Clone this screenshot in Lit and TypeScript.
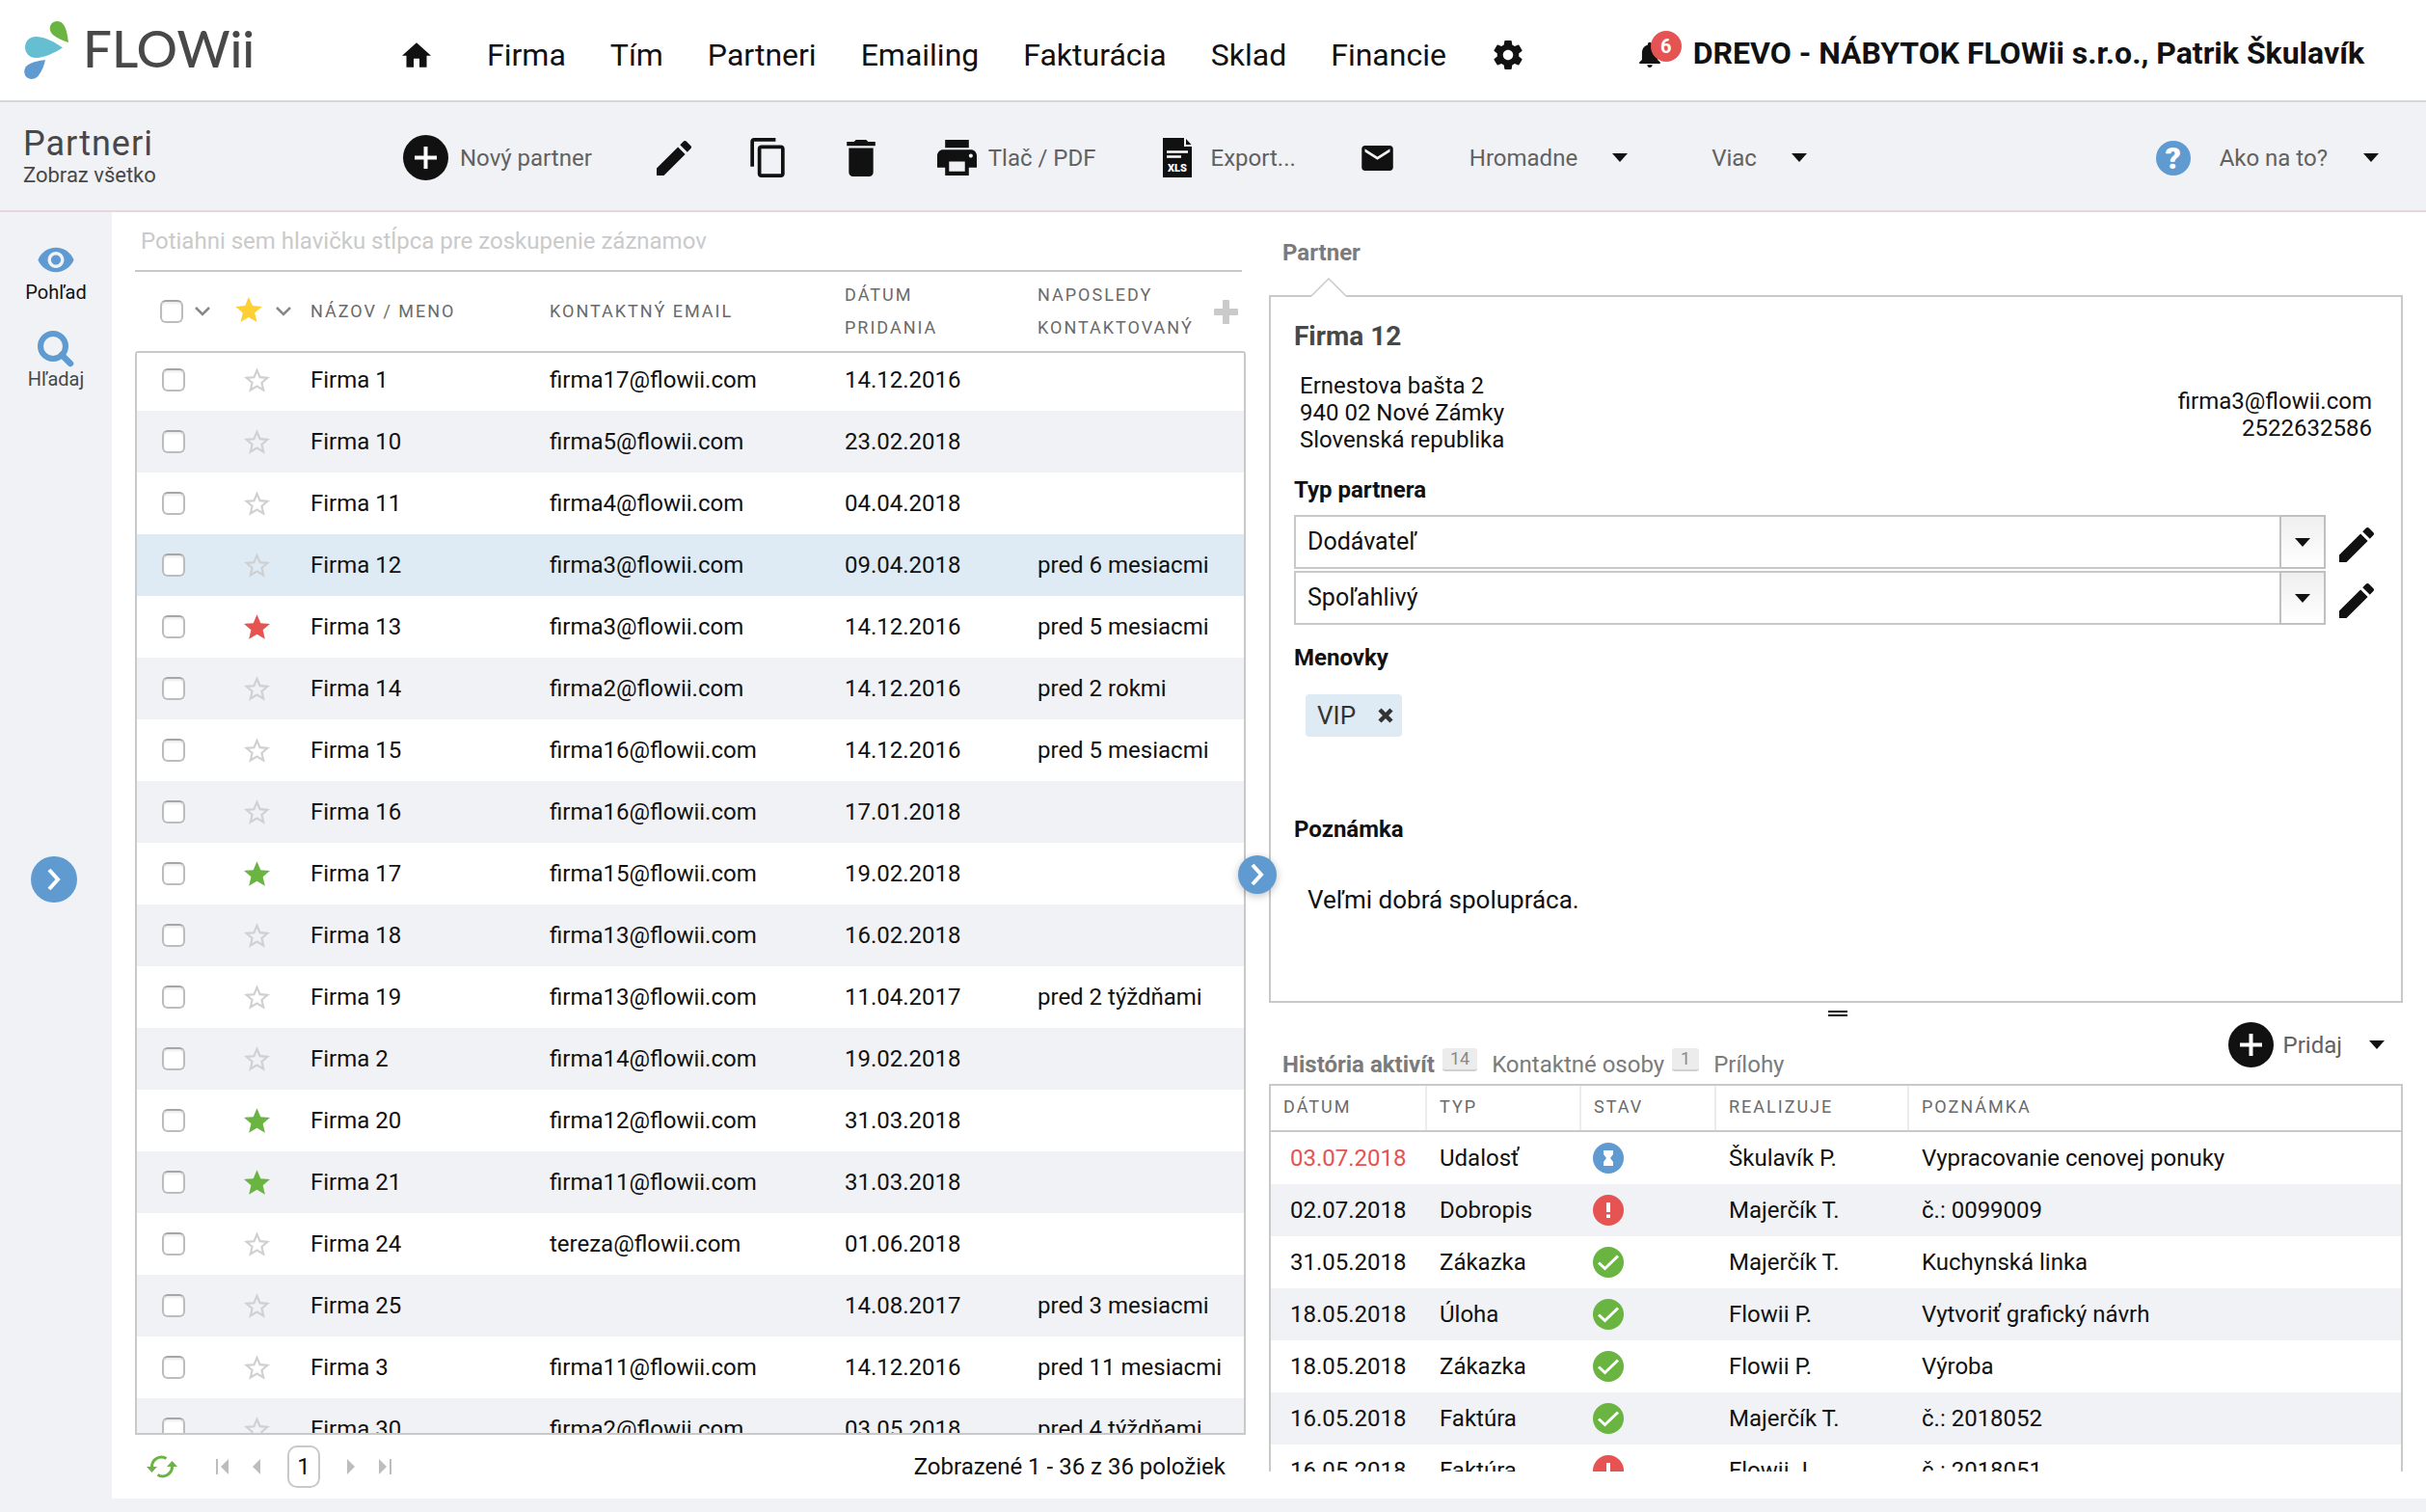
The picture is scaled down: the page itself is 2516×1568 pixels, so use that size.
import { LitElement, html, css, svg, nothing } from "lit";
import { customElement, property, state } from "lit/decorators.js";
import { classMap } from "lit/directives/class-map.js";

const STAR =
  "M12 17.27 18.18 21l-1.64-7.03L22 9.24l-7.19-.61L12 2 9.19 8.63 2 9.24l5.46 4.73L5.82 21z";
const STAR_OUTLINE =
  "M22 9.24l-7.19-.62L12 2 9.19 8.63 2 9.24l5.46 4.73L5.82 21 12 17.27 18.18 21l-1.63-7.03L22 9.24zM12 15.4l-3.76 2.27 1-4.28-3.32-2.88 4.38-.38L12 6.1l1.71 4.04 4.38.38-3.32 2.88 1 4.28L12 15.4z";
const EDIT =
  "M3 17.25V21h3.75L17.81 9.94l-3.75-3.75L3 17.25zM20.71 7.04c.39-.39.39-1.02 0-1.41l-2.34-2.34c-.39-.39-1.02-.39-1.41 0l-1.83 1.83 3.75 3.75 1.83-1.83z";
const COPY =
  "M16 1H4c-1.1 0-2 .9-2 2v14h2V3h12V1zm3 4H8c-1.1 0-2 .9-2 2v14c0 1.1.9 2 2 2h11c1.1 0 2-.9 2-2V7c0-1.1-.9-2-2-2zm0 16H8V7h11v14z";
const TRASH = "M6 19c0 1.1.9 2 2 2h8c1.1 0 2-.9 2-2V7H6v12zM19 4h-3.5l-1-1h-5l-1 1H5v2h14V4z";
const PRINT =
  "M19 8H5c-1.66 0-3 1.34-3 3v6h4v4h12v-4h4v-6c0-1.66-1.34-3-3-3zm-3 11H8v-5h8v5zm3-7c-.55 0-1-.45-1-1s.45-1 1-1 1 .45 1 1-.45 1-1 1zm-1-9H6v4h12V3z";
const MAIL =
  "M20 4H4c-1.1 0-1.99.9-1.99 2L2 18c0 1.1.9 2 2 2h16c1.1 0 2-.9 2-2V6c0-1.1-.9-2-2-2zm0 4l-8 5-8-5V6l8 5 8-5v2z";
const HOME = "M10 20v-6h4v6h5v-8h3L12 3 2 12h3v8z";
const GEAR =
  "M19.43 12.98c.04-.32.07-.64.07-.98s-.03-.66-.07-.98l2.11-1.65c.19-.15.24-.42.12-.64l-2-3.46c-.12-.22-.39-.3-.61-.22l-2.49 1c-.52-.4-1.08-.73-1.69-.98l-.38-2.65C14.46 2.18 14.25 2 14 2h-4c-.25 0-.46.18-.49.42l-.38 2.65c-.61.25-1.17.59-1.69.98l-2.49-1c-.23-.09-.49 0-.61.22l-2 3.46c-.13.22-.07.49.12.64l2.11 1.65c-.04.32-.07.65-.07.98s.03.66.07.98l-2.11 1.65c-.19.15-.24.42-.12.64l2 3.46c.12.22.39.3.61.22l2.49-1c.52.4 1.08.73 1.69.98l.38 2.65c.03.24.24.42.49.42h4c.25 0 .46-.18.49-.42l.38-2.65c.61-.25 1.17-.59 1.69-.98l2.49 1c.23.09.49 0 .61-.22l2-3.46c.12-.22.07-.49-.12-.64l-2.11-1.65zM12 15.5c-1.93 0-3.5-1.57-3.5-3.5s1.57-3.5 3.5-3.5 3.5 1.57 3.5 3.5-1.57 3.5-3.5 3.5z";
const BELL =
  "M12 22c1.1 0 2-.9 2-2h-4c0 1.1.89 2 2 2zm6-6v-5c0-3.07-1.64-5.64-4.5-6.32V4c0-.83-.67-1.5-1.5-1.5s-1.5.67-1.5 1.5v.68C7.63 5.36 6 7.92 6 11v5l-2 2v1h16v-1l-2-2z";
const EYE =
  "M12 4.5C7 4.5 2.73 7.61 1 12c1.73 4.39 6 7.5 11 7.5s9.27-3.11 11-7.5c-1.73-4.39-6-7.5-11-7.5zM12 17c-2.76 0-5-2.24-5-5s2.24-5 5-5 5 2.24 5 5-2.24 5-5 5zm0-8c-1.66 0-3 1.34-3 3s1.34 3 3 3 3-1.34 3-3-1.34-3-3-3z";

const icon = (d: string, box: string, w: number, h: number) => html`<svg
  width=${w} height=${h} viewBox=${box} fill="currentColor" aria-hidden="true"
><path d=${d}></path></svg>`;

const pencil = () => icon(EDIT, "3 3 18 18", 36, 36);
const caret = () => icon("M0 0h16L8 9z", "0 0 16 9", 16, 9);
const plusDisc = () => html`<svg width="47" height="47" viewBox="0 0 47 47" aria-hidden="true">
  <circle cx="23.5" cy="23.5" r="23.5" fill="#111"></circle>
  <path d="M23.5 12v23M12 23.5h23" stroke="#fff" stroke-width="4"></path>
</svg>`;
const chevronDown = () => html`<svg width="16" height="10" viewBox="0 0 16 10" aria-hidden="true">
  <path d="M1 1l7 7 7-7" fill="none" stroke="#888" stroke-width="2.5"></path>
</svg>`;
const chevronRight = () => html`<svg width="14" height="24" viewBox="0 0 14 24" aria-hidden="true">
  <path d="M2 2l9 10-9 10" fill="none" stroke="#fff" stroke-width="4"></path>
</svg>`;

type StarColor = "none" | "red" | "green";
interface Partner {
  name: string;
  email: string;
  added: string;
  contacted: string;
  star: StarColor;
}

const p = (name: string, email: string, added: string, contacted = "", star: StarColor = "none"): Partner => ({
  name,
  email,
  added,
  contacted,
  star,
});

const PARTNERS: Partner[] = [
  p("Firma 1", "firma17@flowii.com", "14.12.2016"),
  p("Firma 10", "firma5@flowii.com", "23.02.2018"),
  p("Firma 11", "firma4@flowii.com", "04.04.2018"),
  p("Firma 12", "firma3@flowii.com", "09.04.2018", "pred 6 mesiacmi"),
  p("Firma 13", "firma3@flowii.com", "14.12.2016", "pred 5 mesiacmi", "red"),
  p("Firma 14", "firma2@flowii.com", "14.12.2016", "pred 2 rokmi"),
  p("Firma 15", "firma16@flowii.com", "14.12.2016", "pred 5 mesiacmi"),
  p("Firma 16", "firma16@flowii.com", "17.01.2018"),
  p("Firma 17", "firma15@flowii.com", "19.02.2018", "", "green"),
  p("Firma 18", "firma13@flowii.com", "16.02.2018"),
  p("Firma 19", "firma13@flowii.com", "11.04.2017", "pred 2 týždňami"),
  p("Firma 2", "firma14@flowii.com", "19.02.2018"),
  p("Firma 20", "firma12@flowii.com", "31.03.2018", "", "green"),
  p("Firma 21", "firma11@flowii.com", "31.03.2018", "", "green"),
  p("Firma 24", "tereza@flowii.com", "01.06.2018"),
  p("Firma 25", "", "14.08.2017", "pred 3 mesiacmi"),
  p("Firma 3", "firma11@flowii.com", "14.12.2016", "pred 11 mesiacmi"),
  p("Firma 30", "firma2@flowii.com", "03.05.2018", "pred 4 týždňami"),
];

type Status = "waiting" | "alert" | "done";
interface Activity {
  date: string;
  type: string;
  status: Status;
  owner: string;
  note: string;
  late?: boolean;
}

const ACTIVITIES: Activity[] = [
  { date: "03.07.2018", type: "Udalosť", status: "waiting", owner: "Škulavík P.", note: "Vypracovanie cenovej ponuky", late: true },
  { date: "02.07.2018", type: "Dobropis", status: "alert", owner: "Majerčík T.", note: "č.: 0099009" },
  { date: "31.05.2018", type: "Zákazka", status: "done", owner: "Majerčík T.", note: "Kuchynská linka" },
  { date: "18.05.2018", type: "Úloha", status: "done", owner: "Flowii P.", note: "Vytvoriť grafický návrh" },
  { date: "18.05.2018", type: "Zákazka", status: "done", owner: "Flowii P.", note: "Výroba" },
  { date: "16.05.2018", type: "Faktúra", status: "done", owner: "Majerčík T.", note: "č.: 2018052" },
  { date: "16.05.2018", type: "Faktúra", status: "alert", owner: "Flowii J.", note: "č.: 2018051" },
];

const base = css`
  * {
    box-sizing: border-box;
  }
  svg {
    display: block;
    flex: none;
  }
  button,
  select,
  textarea,
  input {
    font: inherit;
    color: inherit;
    margin: 0;
  }
  button {
    background: none;
    border: 0;
    padding: 0;
    cursor: pointer;
    display: flex;
    align-items: center;
  }
  a {
    color: inherit;
    text-decoration: none;
  }
  .check {
    appearance: none;
    width: 24px;
    height: 24px;
    border: 2px solid #bdbdbd;
    border-top-color: #a6a6a6;
    border-radius: 6px;
    background: #fff;
    box-shadow: inset 0 2px 2px #ececec;
  }
  .check:checked {
    background: #5f9bd0;
  }
`;

@customElement("app-header")
class AppHeader extends LitElement {
  static styles = [
    base,
    css`
      :host {
        display: block;
      }
      .bar {
        display: grid;
        grid-template-columns: 393px 1fr auto;
        align-items: center;
        height: 106px;
        padding: 0 64px 0 24px;
        border-bottom: 2px solid #d6d6d6;
        background: #fff;
      }
      .logo {
        display: flex;
        align-items: center;
        gap: 14px;
        font: 500 53px/60px Lato, sans-serif;
        color: #484848;
      }
      .word {
        padding-bottom: 4px;
      }
      .nav {
        display: flex;
        align-items: center;
        gap: 46px;
        padding-top: 10px;
        font-size: 32px;
        line-height: 40px;
      }
      .home {
        margin-right: 12px;
      }
      .gear {
        margin-left: 3px;
      }
      .user {
        display: flex;
        align-items: center;
        gap: 12px;
        padding-top: 5px;
        font-size: 32px;
        line-height: 40px;
        font-weight: 700;
      }
      .bell {
        position: relative;
        width: 44px;
        height: 40px;
        padding-top: 8px;
        align-items: flex-start;
      }
      .count {
        position: absolute;
        right: 0;
        top: -3px;
        width: 32px;
        height: 32px;
        border-radius: 50%;
        background: #e55353;
        color: #fff;
        font-size: 20px;
        line-height: 32px;
        text-align: center;
      }
    `,
  ];

  render() {
    const items = ["Firma", "Tím", "Partneri", "Emailing", "Fakturácia", "Sklad", "Financie"];
    return html`<header class="bar">
      <a class="logo" href="#">
        <svg width="48" height="62" viewBox="24 19 48 62" aria-hidden="true">
          <path fill="#6ab441" d="M71 42C70 34 68.500 26 65 22.500C61.500 19 56 19.500 53.500 22.500C50.500 26 51.500 31.500 55.500 34.500C59.500 37.500 65 40 71 42Z"></path>
          <path fill="#65bfd1" d="M65 47.500C57 42 48 36.500 38 36C31 35.800 26 40.500 26 47C26 53.500 31 58 37 58C47 57.500 56 53 65 47.500Z"></path>
          <path fill="#5f9bd0" d="M47 60C46 65 44 71 39.500 77C36 80.800 30 81 27 77.500C24.500 74.500 24.500 69 28 66C32.500 62.500 40 61 47 60Z"></path>
        </svg>
        <span class="word">FLOWii</span>
      </a>
      <nav class="nav">
        <a class="home" href="#" aria-label="Domov">${icon(HOME, "2 3 20 17", 30, 26)}</a>
        ${items.map((t) => html`<a href="#">${t}</a>`)}
        <a class="gear" href="#" aria-label="Nastavenia">${icon(GEAR, "2 2 20 20", 30, 30)}</a>
      </nav>
      <div class="user">
        <button class="bell" aria-label="Upozornenia">
          ${icon(BELL, "4 2 16 20", 22, 27)}<span class="count">6</span>
        </button>
        <a href="#">DREVO - NÁBYTOK FLOWii s.r.o., Patrik Škulavík</a>
      </div>
    </header>`;
  }
}

@customElement("app-toolbar")
class AppToolbar extends LitElement {
  static styles = [
    base,
    css`
      :host {
        display: block;
      }
      .bar {
        display: grid;
        grid-template-columns: 394px 1fr auto;
        align-items: center;
        height: 114px;
        padding: 0 49px 0 24px;
        border-bottom: 2px solid #e6d8da;
        background: #f1f2f6;
      }
      .title {
        margin: 0;
        font-size: 36px;
        line-height: 40px;
        font-weight: 400;
        letter-spacing: 1px;
        color: #484848;
      }
      .sub {
        margin: 0;
        font-size: 22px;
        line-height: 26px;
        color: #484848;
      }
      .tools {
        display: flex;
        align-items: center;
        gap: 61px;
        padding-top: 3px;
        color: #111;
      }
      .tool {
        justify-content: center;
        min-width: 36px;
      }
      .labelled {
        gap: 12px;
        padding-right: 6px;
      }
      .menu {
        gap: 36px;
        padding: 0 10px 0 16px;
      }
      .text {
        color: #616161;
      }
      .doc {
        padding: 0 8px 0 2px;
      }
      .doc-text {
        font: 900 11px Roboto, sans-serif;
        fill: #fff;
      }
      .help {
        display: flex;
        gap: 30px;
        align-items: center;
        padding-top: 3px;
      }
      .help-menu {
        gap: 37px;
      }
      .question {
        width: 36px;
        height: 36px;
        border-radius: 50%;
        background: #5f9bd0;
        color: #fff;
        font-size: 32px;
        line-height: 36px;
        font-weight: 900;
        text-align: center;
      }
    `,
  ];

  render() {
    return html`<section class="bar">
      <div>
        <h1 class="title">Partneri</h1>
        <p class="sub">Zobraz všetko</p>
      </div>
      <div class="tools">
        <button class="tool labelled">${plusDisc()}<span class="text">Nový partner</span></button>
        <button class="tool" aria-label="Upraviť">${pencil()}</button>
        <button class="tool" aria-label="Kopírovať">${icon(COPY, "2 1 19 22", 36, 41)}</button>
        <button class="tool" aria-label="Zmazať">${icon(TRASH, "5 3 14 18", 30, 38)}</button>
        <button class="tool labelled">${icon(PRINT, "2 3 20 18", 41, 37)}<span class="text">Tlač / PDF</span></button>
        <button class="tool labelled">
          <span class="doc">
            <svg width="30" height="41" viewBox="0 0 30 41" aria-hidden="true">
              <path fill="#111" d="M0 0h22v9h8v32H0z"></path>
              <path fill="#111" d="M24 1l5.500 6H24z"></path>
              <path stroke="#fff" stroke-width="2.5" d="M4 14.500h22M4 19.500h15"></path>
              <text class="doc-text" x="15" y="35" text-anchor="middle">XLS</text>
            </svg>
          </span>
          <span class="text">Export...</span>
        </button>
        <button class="tool" aria-label="Poslať email">${icon(MAIL, "2 4 20 16", 33, 26)}</button>
        <button class="menu"><span class="text">Hromadne</span>${caret()}</button>
        <button class="menu"><span class="text">Viac</span>${caret()}</button>
      </div>
      <div class="help">
        <span class="question">?</span>
        <button class="help-menu"><span class="text">Ako na to?</span>${caret()}</button>
      </div>
    </section>`;
  }
}

@customElement("side-rail")
class SideRail extends LitElement {
  static styles = [
    base,
    css`
      :host {
        display: grid;
        grid-template-rows: 1fr auto 1fr;
        justify-items: center;
        padding-top: 36px;
        background: #f1f2f6;
        font-size: 20px;
        line-height: 24px;
      }
      .links {
        display: flex;
        flex-direction: column;
        align-items: center;
        gap: 28px;
      }
      .link {
        flex-direction: column;
        gap: 8px;
        color: #111;
      }
      .search {
        gap: 0;
        color: #484848;
      }
      .ico {
        color: #5f9bd0;
      }
      .open {
        justify-content: center;
        width: 48px;
        height: 48px;
        margin-right: 4px;
        border-radius: 50%;
        background: #5f9bd0;
      }
    `,
  ];

  render() {
    return html`<div class="links">
        <button class="link"><span class="ico">${icon(EYE, "1 4 22 16", 40, 27)}</span>Pohľad</button>
        <button class="link search">
          <span class="ico">
            <svg width="40" height="38" viewBox="0 0 40 38" aria-hidden="true">
              <circle cx="17" cy="16" r="13" fill="none" stroke="currentColor" stroke-width="6"></circle>
              <path d="M26 25l9 9" stroke="currentColor" stroke-width="6.5" stroke-linecap="round"></path>
            </svg>
          </span>
          Hľadaj
        </button>
      </div>
      <button class="open" aria-label="Rozbaliť panel">${chevronRight()}</button>`;
  }
}

@customElement("partner-list")
class PartnerList extends LitElement {
  @state() private selected = 3;

  static styles = [
    base,
    css`
      :host {
        position: relative;
        display: flex;
        flex-direction: column;
        min-height: 0;
      }
      .group {
        display: flex;
        align-items: center;
        height: 62px;
        margin-right: 4px;
        padding-left: 6px;
        border-bottom: 2px solid #c9c9c9;
        color: #cacaca;
      }
      .grid {
        display: flex;
        flex-direction: column;
        flex: 1;
        min-height: 0;
      }
      .head {
        display: block;
        padding: 0 2px;
        font-size: 18px;
        line-height: 34px;
        letter-spacing: 2px;
        color: #6a6a6a;
      }
      .row {
        display: grid;
        grid-template-columns: 88px 72px 248fr 306fr 200fr 234fr;
        align-items: center;
        height: 64px;
      }
      .head-row {
        height: 82px;
      }
      .body {
        display: block;
        flex: 1;
        min-height: 0;
        overflow: hidden;
        border: 2px solid #c9c9c9;
        border-radius: 3px 3px 0 0;
      }
      .body .row:first-child {
        margin-top: -4px;
      }
      .body .row:nth-child(even) {
        background: #f1f2f6;
      }
      .body .row.selected {
        background: #deebf5;
      }
      .cell {
        display: block;
        min-width: 0;
        padding: 0 0 0 20px;
        font-weight: 400;
        text-align: left;
        white-space: nowrap;
      }
      .pick {
        display: flex;
        align-items: center;
        padding-left: 26px;
      }
      .pick-all {
        display: flex;
        align-items: center;
        gap: 12px;
        padding-left: 24px;
      }
      .fav {
        display: flex;
        justify-content: center;
        padding: 0;
      }
      .fav-all {
        display: flex;
        align-items: center;
        gap: 14px;
        padding-left: 14px;
      }
      .last {
        display: flex;
        align-items: center;
        justify-content: space-between;
        padding-right: 6px;
      }
      .none {
        color: #d0d0d0;
      }
      .red {
        color: #e55353;
      }
      .green {
        color: #6ab441;
      }
      .yellow {
        padding-bottom: 4px;
        color: #fed033;
      }
      .pager {
        display: flex;
        align-items: center;
        height: 66px;
        padding: 0 21px 0 12px;
        color: #bdbdbd;
      }
      .refresh {
        margin-right: 40px;
      }
      .first {
        margin-right: 25px;
      }
      .page {
        justify-content: center;
        width: 34px;
        height: 44px;
        margin: 0 28px;
        border: 2px solid #c9c9c9;
        border-radius: 10px;
        color: #111;
      }
      .to-end {
        margin-left: 25px;
      }
      .total {
        margin-left: auto;
        color: #111;
      }
      .split {
        position: absolute;
        top: 50%;
        right: -32px;
        z-index: 1;
        justify-content: center;
        width: 40px;
        height: 40px;
        border-radius: 50%;
        background: #5f9bd0;
        box-shadow: 0 2px 8px rgba(0, 0, 0, 0.25);
      }
    `,
  ];

  render() {
    return html`<div class="group">Potiahni sem hlavičku stĺpca pre zoskupenie záznamov</div>
      <table class="grid">
        <thead class="head">
          <tr class="row head-row">
            <th class="cell pick-all">
              <input class="check" type="checkbox" aria-label="Vybrať všetko" />${chevronDown()}
            </th>
            <th class="cell fav-all"><span class="yellow">${icon(STAR, "2 2 20 19", 28, 26)}</span>${chevronDown()}</th>
            <th class="cell">NÁZOV / MENO</th>
            <th class="cell">KONTAKTNÝ EMAIL</th>
            <th class="cell">DÁTUM<br />PRIDANIA</th>
            <th class="cell last">
              <span>NAPOSLEDY<br />KONTAKTOVANÝ</span>
              <button aria-label="Pridať stĺpec">
                <svg width="25" height="25" viewBox="0 0 25 25" aria-hidden="true">
                  <path fill="#cacaca" d="M10 0h5q1 0 1 1v8h8q1 0 1 1v5q0 1-1 1h-8v8q0 1-1 1h-5q-1 0-1-1v-8H1q-1 0-1-1v-5q0-1 1-1h8V1q0-1 1-1z"></path>
                </svg>
              </button>
            </th>
          </tr>
        </thead>
        <tbody class="body">
          ${PARTNERS.map(
            (r, i) => html`<tr
              class=${classMap({ row: true, selected: i === this.selected })}
              @click=${() => (this.selected = i)}
            >
              <td class="cell pick"><input class="check" type="checkbox" aria-label=${r.name} /></td>
              <td class="cell fav">
                <span class=${r.star}>${icon(r.star === "none" ? STAR_OUTLINE : STAR, "2 2 20 19", 27, 26)}</span>
              </td>
              <td class="cell">${r.name}</td>
              <td class="cell">${r.email}</td>
              <td class="cell">${r.added}</td>
              <td class="cell">${r.contacted}</td>
            </tr>`
          )}
        </tbody>
      </table>
      <footer class="pager">
        <button class="refresh" aria-label="Obnoviť">
          <svg width="32" height="24" viewBox="0 0 32 24" aria-hidden="true">
            <path fill="none" stroke="#6ab441" stroke-width="3" d="M5.500 12.500A10 10 0 0 1 20.500 3.500M26.500 11.500A10 10 0 0 1 11.500 20.500"></path>
            <path fill="#6ab441" d="M0 12h11l-5.500 6zM21 12h11l-5.500-6z"></path>
          </svg>
        </button>
        <button class="first" aria-label="Prvá strana">${icon("M0 0h2v16H0zM13 0v16L5 8z", "0 0 13 16", 13, 16)}</button>
        <button aria-label="Predchádzajúca strana">${icon("M8 0v16L0 8z", "0 0 8 16", 8, 16)}</button>
        <button class="page">1</button>
        <button aria-label="Ďalšia strana">${icon("M0 0v16l8-8z", "0 0 8 16", 8, 16)}</button>
        <button class="to-end" aria-label="Posledná strana">${icon("M11 0h2v16h-2zM0 0v16l8-8z", "0 0 13 16", 13, 16)}</button>
        <span class="total">Zobrazené 1 - 36 z 36 položiek</span>
      </footer>
      <button class="split" aria-label="Skryť detail">${chevronRight()}</button>`;
  }
}

@customElement("status-icon")
class StatusIcon extends LitElement {
  @property() kind: Status = "done";

  static styles = [
    base,
    css`
      :host {
        display: block;
      }
    `,
  ];

  render() {
    const fill = { waiting: "#5f9bd0", alert: "#e55353", done: "#6ab441" }[this.kind];
    const mark = {
      waiting: svg`<path fill="#fff" d="M11 8h10v4l-3 4 3 4v4H11v-4l3-4-3-4z"></path>`,
      alert: svg`<path fill="#fff" d="M14 8h4v10h-4zM14 20.500h4v3.500h-4z"></path>`,
      done: svg`<path fill="none" stroke="#fff" stroke-width="3" d="M6 16.500l6.500 6L26 9.500"></path>`,
    }[this.kind];
    return html`<svg width="32" height="32" viewBox="0 0 32 32" aria-hidden="true">
      <circle cx="16" cy="16" r="16" fill=${fill}></circle>${mark}
    </svg>`;
  }
}

@customElement("partner-detail")
class PartnerDetail extends LitElement {
  static styles = [
    base,
    css`
      :host {
        display: grid;
        grid-template-rows: 86px minmax(0, 734fr) 84px minmax(0, 402fr);
        min-height: 0;
        padding-bottom: 28px;
      }
      .tab {
        margin: 0;
        padding: 28px 0 0 14px;
        font-size: 24px;
        line-height: 28px;
        font-weight: 700;
        color: #7b7b7b;
      }
      .card {
        position: relative;
        min-height: 0;
        padding: 23px 24px 0;
        border: 2px solid #c9c9c9;
      }
      .notch {
        position: absolute;
        left: 42px;
        top: -20px;
      }
      .name {
        margin: 0;
        font-size: 28px;
        line-height: 36px;
        font-weight: 700;
        color: #484848;
      }
      .contact {
        display: flex;
        align-items: center;
        justify-content: space-between;
        margin-top: 19px;
        padding: 0 6px;
        line-height: 28px;
        font-style: normal;
      }
      .reach {
        padding-top: 4px;
        text-align: right;
      }
      .label {
        display: block;
        margin-top: 22px;
        line-height: 32px;
        font-weight: 700;
      }
      .fields {
        display: grid;
        gap: 2px;
        margin-top: 10px;
      }
      .field {
        display: flex;
        align-items: center;
        gap: 14px;
        padding-right: 4px;
      }
      .combo {
        position: relative;
        flex: 1;
      }
      .select {
        display: block;
        appearance: none;
        width: 100%;
        height: 56px;
        padding: 0 60px 0 12px;
        border: 2px solid #c9c9c9;
        border-radius: 0;
        background: #fff;
        font-size: 25px;
        color: #111;
      }
      .drop {
        position: absolute;
        inset: 0 0 0 auto;
        display: flex;
        align-items: center;
        justify-content: center;
        width: 48px;
        border: 2px solid #c0c0c0;
        background: linear-gradient(#efefef, #fff);
        pointer-events: none;
      }
      .edit {
        padding-top: 6px;
      }
      .tags-label {
        margin-top: 18px;
      }
      .tags {
        display: flex;
        margin: 22px 12px 0;
      }
      .tag {
        display: flex;
        align-items: center;
        gap: 23px;
        height: 44px;
        padding: 0 9px 0 12px;
        border-radius: 4px;
        background: #deebf5;
        font-size: 26px;
        color: #333;
      }
      .note-label {
        margin-top: 80px;
      }
      .note {
        display: block;
        width: 100%;
        height: 100px;
        margin-top: 33px;
        padding: 6px 14px;
        border: 0;
        resize: none;
        background: none;
        font-size: 26px;
        line-height: 36px;
        color: #111;
      }
      .mid {
        position: relative;
        display: flex;
        align-items: flex-end;
        justify-content: space-between;
        padding: 0 19px 0 14px;
      }
      .handle {
        position: absolute;
        left: 50%;
        top: 8px;
        width: 20px;
        height: 6px;
        margin-left: -8px;
        border: solid #111;
        border-width: 2px 0;
      }
      .tabs {
        display: flex;
        align-items: flex-end;
        gap: 15px;
        color: #7b7b7b;
        padding-bottom: 3px;
      }
      .tabs button {
        gap: 8px;
        height: 34px;
        line-height: 28px;
      }
      .active {
        font-weight: 700;
      }
      .badge {
        min-width: 28px;
        height: 24px;
        margin-bottom: 10px;
        padding: 0 8px;
        border-bottom: 2px solid #d0d0d0;
        border-radius: 3px;
        background: #ececec;
        font-size: 18px;
        line-height: 22px;
        font-weight: 400;
        color: #8a8a8a;
        text-align: center;
      }
      .add {
        align-self: flex-start;
        gap: 10px;
        margin-top: 20px;
        color: #111;
      }
      .add-text {
        margin-right: 18px;
        color: #616161;
      }
      .activity {
        display: block;
        min-height: 0;
        overflow: hidden;
        border: solid #c9c9c9;
        border-width: 2px 2px 0;
      }
      .activity thead,
      .activity tbody {
        display: block;
      }
      .row {
        display: grid;
        grid-template-columns: 162px 160px 140px 200px 1fr;
        align-items: center;
        height: 54px;
      }
      .row:nth-child(even) {
        background: #f1f2f6;
      }
      .head {
        height: 48px;
        align-items: stretch;
        border-bottom: 2px solid #c9c9c9;
        font-size: 18px;
        letter-spacing: 2px;
        color: #6a6a6a;
      }
      .cell {
        padding: 0 0 0 13px;
        font-weight: 400;
        text-align: left;
        line-height: 44px;
        white-space: nowrap;
      }
      .head .cell {
        border-right: 2px solid #ececec;
      }
      .head .cell:last-child {
        border-right: 0;
      }
      .row .state {
        padding-left: 12px;
      }
      .row .date {
        padding-left: 20px;
      }
      .late {
        color: #e55353;
      }
    `,
  ];

  private field(id: string, value: string, options: string[], label: string | typeof nothing) {
    return html`<div class="field">
      <div class="combo">
        <select class="select" id=${id} aria-label=${label}>
          ${options.map((o) => html`<option ?selected=${o === value}>${o}</option>`)}
        </select>
        <span class="drop">${caret()}</span>
      </div>
      <button class="edit" aria-label="Upraviť hodnotu">${pencil()}</button>
    </div>`;
  }

  render() {
    return html`<h2 class="tab">Partner</h2>
      <section class="card">
        <svg class="notch" width="36" height="22" viewBox="0 0 36 22" aria-hidden="true">
          <path d="M0 19L18 1l18 18v3H0z" fill="#fff"></path>
          <path d="M0 19L18 1l18 18" fill="none" stroke="#c9c9c9" stroke-width="1.5"></path>
        </svg>
        <h3 class="name">Firma 12</h3>
        <address class="contact">
          <div>Ernestova bašta 2<br />940 02 Nové Zámky<br />Slovenská republika</div>
          <div class="reach"><a href="mailto:firma3@flowii.com">firma3@flowii.com</a><br />2522632586</div>
        </address>
        <label class="label" for="type">Typ partnera</label>
        <div class="fields">
          ${this.field("type", "Dodávateľ", ["Dodávateľ"], nothing)}
          ${this.field("rating", "Spoľahlivý", ["Spoľahlivý"], "Hodnotenie")}
        </div>
        <span class="label tags-label">Menovky</span>
        <div class="tags">
          <span class="tag">VIP
            <button aria-label="Odstrániť VIP">
              <svg width="16" height="16" viewBox="0 0 16 16" aria-hidden="true">
                <path d="M2 2l12 12M14 2L2 14" stroke="#333" stroke-width="4.5"></path>
              </svg>
            </button>
          </span>
        </div>
        <label class="label note-label" for="note">Poznámka</label>
        <textarea class="note" id="note" .value=${"Veľmi dobrá spolupráca."}></textarea>
      </section>
      <div class="mid">
        <span class="handle"></span>
        <div class="tabs">
          <button class="active">História aktivít<span class="badge">14</span></button>
          <button>Kontaktné osoby<span class="badge">1</span></button>
          <button>Prílohy</button>
        </div>
        <button class="add">${plusDisc()}<span class="add-text">Pridaj</span>${caret()}</button>
      </div>
      <table class="activity">
        <thead>
          <tr class="row head">
            ${["DÁTUM", "TYP", "STAV", "REALIZUJE", "POZNÁMKA"].map((t) => html`<th class="cell">${t}</th>`)}
          </tr>
        </thead>
        <tbody>
          ${ACTIVITIES.map(
            (a) => html`<tr class="row">
              <td class=${classMap({ cell: true, date: true, late: !!a.late })}>${a.date}</td>
              <td class="cell">${a.type}</td>
              <td class="cell state"><status-icon kind=${a.status}></status-icon></td>
              <td class="cell">${a.owner}</td>
              <td class="cell">${a.note}</td>
            </tr>`
          )}
        </tbody>
      </table>`;
  }
}

@customElement("app-root")
class AppRoot extends LitElement {
  static styles = css`
    :host {
      display: grid;
      grid-template-rows: auto auto minmax(0, 1fr);
      height: 100vh;
      background: #f1f2f6;
      font-family: Roboto, "Open Sans", sans-serif;
      font-size: 24px;
      line-height: 28px;
      color: #111;
    }
    .page {
      display: grid;
      grid-template-columns: 116px minmax(0, 1fr);
      min-height: 0;
    }
    .main {
      display: grid;
      grid-template-columns: minmax(0, 1152fr) minmax(0, 1176fr);
      gap: 24px;
      min-height: 0;
      margin-bottom: 14px;
      padding: 0 24px;
      background: #fff;
    }
  `;

  render() {
    return html`<app-header></app-header>
      <app-toolbar></app-toolbar>
      <div class="page">
        <side-rail></side-rail>
        <main class="main">
          <partner-list></partner-list>
          <partner-detail></partner-detail>
        </main>
      </div>`;
  }
}
